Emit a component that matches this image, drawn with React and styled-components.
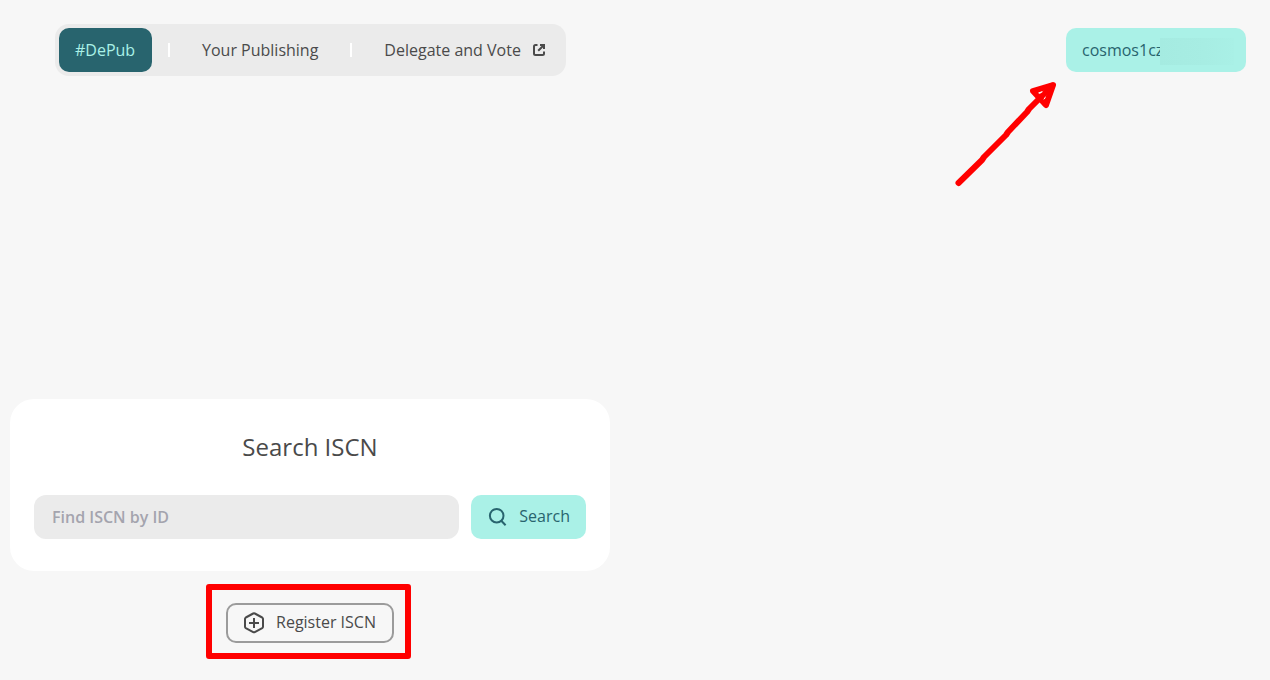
import React from "react";
import styled, { createGlobalStyle } from "styled-components";

const GlobalStyle = createGlobalStyle`
  *, *::before, *::after { box-sizing: border-box; }
  body {
    margin: 0;
    background: #f7f7f7;
    color: #4a4a4a;
    font-family: "Open Sans", "Noto Sans", sans-serif;
    font-size: 16px;
    line-height: 24px;
  }
  button, input { font: inherit; }
`;

const Header = styled.header`
  display: flex;
  justify-content: space-between;
  align-items: center;
  padding: 24px 24px 0 55px;
`;

const Nav = styled.nav`
  display: flex;
  align-items: center;
  gap: 16px;
  padding: 4px;
  border-radius: 14px;
  background: #ebebeb;
`;

const NavLink = styled.a`
  display: flex;
  align-items: center;
  gap: 11px;
  min-width: 93px;
  height: 44px;
  padding: 0 16px;
  border-radius: 10px;
  text-decoration: none;
  white-space: nowrap;
  color: ${(p) => (p.$active ? "#aaf1e7" : "#4a4a4a")};
  background: ${(p) => (p.$active ? "#28646e" : "transparent")};
  font-weight: ${(p) => (p.$active ? 500 : 400)};
`;

const Divider = styled.span`
  width: 2px;
  height: 14px;
  background: #fff;
`;

const Account = styled.div`
  position: relative;
`;

const PrimaryButton = styled.button`
  display: flex;
  align-items: center;
  gap: 12px;
  height: 44px;
  padding: 0 16px;
  border: 0;
  border-radius: 10px;
  background: #aaf1e7;
  color: #28646e;
  white-space: nowrap;
  cursor: pointer;
`;

const AccountButton = styled(PrimaryButton)`
  width: 180px;
`;

const SearchButton = styled(PrimaryButton)`
  padding-bottom: 2px;
`;

const Redaction = styled.span`
  position: absolute;
  top: 10px;
  left: 94px;
  width: 74px;
  height: 27px;
  background: linear-gradient(90deg, #a5ebe1, #a7ede3 60%, #a9f0e6);
`;

const Arrow = styled.svg`
  position: absolute;
  top: 50px;
  right: 186px;
  pointer-events: none;
`;

const Main = styled.main`
  max-width: 620px;
  padding: 323px 10px 16px;
`;

const Card = styled.section`
  padding: 32px 24px;
  border-radius: 24px;
  background: #fff;
`;

const Title = styled.h1`
  margin: 0 0 32px;
  font-size: 24px;
  line-height: 32px;
  font-weight: 400;
  text-align: center;
`;

const SearchForm = styled.form`
  display: flex;
  gap: 12px;
`;

const SearchInput = styled.input`
  flex: 1;
  min-width: 0;
  height: 44px;
  padding: 0 18px;
  border: 0;
  border-radius: 12px;
  background: #ebebeb;
  color: #4a4a4a;
  font-weight: 600;
  &::placeholder { color: #a4a4ae; opacity: 1; }
`;

const Actions = styled.div`
  display: flex;
  justify-content: center;
  padding-top: 32px;
`;

const Highlighted = styled.div`
  position: relative;
  &::after {
    content: "";
    position: absolute;
    inset: -19px -17px -16px -20px;
    border: 6px solid #f00;
    border-radius: 3px;
    pointer-events: none;
  }
`;

const OutlineButton = styled.button`
  display: flex;
  align-items: center;
  gap: 11px;
  height: 40px;
  padding: 0 16px 2px 15px;
  border: 2px solid #9b9b9b;
  border-radius: 10px;
  background: transparent;
  color: #4a4a4a;
  white-space: nowrap;
  cursor: pointer;
`;

const ExternalIcon = () => (
  <svg width="14" height="14" viewBox="0 0 14 14" fill="none" stroke="#4a4a4a" strokeWidth="2" aria-hidden="true">
    <path d="M5.5 2H3.5Q2 2 2 3.5V10.5Q2 12 3.5 12H10.5Q12 12 12 10.5V8.5" />
    <path d="M8 2H12V6M12 2L6.2 7.8" />
  </svg>
);

const SearchIcon = () => (
  <svg width="20" height="20" viewBox="0 0 20 20" fill="none" stroke="#28646e" strokeWidth="2" aria-hidden="true">
    <circle cx="9.7" cy="9.7" r="6.8" />
    <path d="M14 14.5L18.6 19.3" />
  </svg>
);

const RegisterIcon = () => (
  <svg width="22" height="24" viewBox="0 -2 22 24" fill="none" stroke="#4a4a4a" strokeWidth="2" strokeLinejoin="round" aria-hidden="true">
    <path d="M10.2 1.5Q11 1.1 11.8 1.5L19.2 5.5Q20 6 20 6.8V14.8Q20 15.6 19.2 16.1L11.8 20.1Q11 20.5 10.2 20.1L2.8 16.1Q2 15.6 2 14.8V6.8Q2 6 2.8 5.5Z" />
    <path d="M11 6V16M6 11H16" />
  </svg>
);

export default function App() {
  return (
    <>
      <GlobalStyle />
      <Header>
        <Nav aria-label="Main">
          <NavLink href="#depub" $active aria-current="page">#DePub</NavLink>
          <Divider />
          <NavLink href="#publishing">Your Publishing</NavLink>
          <Divider />
          <NavLink href="#delegate">
            Delegate and Vote
            <ExternalIcon />
          </NavLink>
        </Nav>
        <Account>
          <AccountButton type="button">cosmos1cz</AccountButton>
          <Redaction />
          <Arrow width="108" height="112" viewBox="0 0 108 112" fill="none" stroke="#f00" strokeWidth="6" strokeLinecap="round" strokeLinejoin="round" aria-hidden="true">
            <path d="M6.500 105L30 82L32 79L54 57L56 54L75 34L77 31L100 8" />
            <path d="M101 7L81 13L94 27Z" />
            <path d="M87 15L90 14M92 21L93 20" stroke="#f7f7f7" strokeWidth="1" />
          </Arrow>
        </Account>
      </Header>
      <Main>
        <Card>
          <Title>Search ISCN</Title>
          <SearchForm onSubmit={(e) => e.preventDefault()}>
            <SearchInput type="text" aria-label="Find ISCN by ID" placeholder="Find ISCN by ID" />
            <SearchButton type="submit">
              <SearchIcon />
              Search
            </SearchButton>
          </SearchForm>
        </Card>
        <Actions>
          <Highlighted>
            <OutlineButton type="button">
              <RegisterIcon />
              Register ISCN
            </OutlineButton>
          </Highlighted>
        </Actions>
      </Main>
    </>
  );
}
